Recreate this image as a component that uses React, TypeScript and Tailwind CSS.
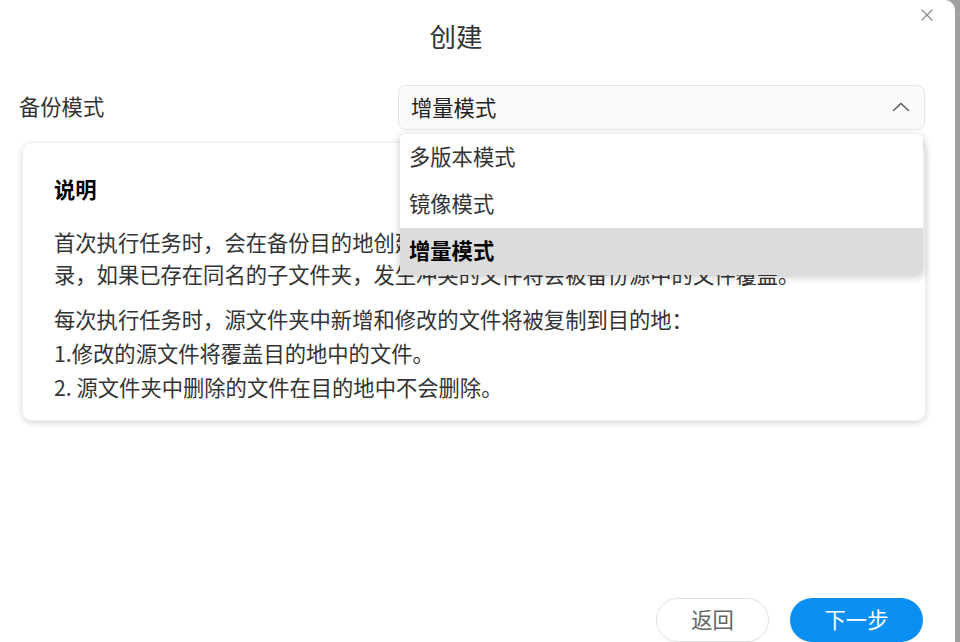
import { useState } from "react";

const modes = ["多版本模式", "镜像模式", "增量模式"];

function CloseIcon() {
  return (
    <svg width="12" height="12" viewBox="0 0 12 12" aria-hidden>
      <path d="M1 1L11 11M11 1L1 11" stroke="#8a8a8a" strokeWidth="1.3" strokeLinecap="round" />
    </svg>
  );
}

function ChevronUp() {
  return (
    <svg width="18" height="10" viewBox="0 0 18 10" aria-hidden>
      <path d="M1.5 8.5L9 1.5L16.5 8.5" fill="none" stroke="#555" strokeWidth="1.3" strokeLinecap="round" />
    </svg>
  );
}

export default function App() {
  const [mode, setMode] = useState("增量模式");
  const [open, setOpen] = useState(true);

  return (
    <div
      className="flex h-[642px] w-[960px] overflow-hidden bg-[#a0a0a0]"
      style={{ fontFamily: '"Noto Sans CJK SC", "Noto Sans", sans-serif' }}
    >
      <div className="relative flex w-[955px] flex-col rounded-tr-[10px] bg-white">
        <button type="button" className="absolute right-[22px] top-[9px] p-0">
          <CloseIcon />
        </button>

        <div className="flex h-[76px] items-center justify-center pb-[4px] pr-[43px] text-[26.5px] text-[#333]">
          创建
        </div>

        <div className="mt-[9px] flex h-[45px] items-center">
          <span className="pb-[3px] pl-[19px] text-[21.3px] text-[#333]">备份模式</span>
          <div className="relative ml-auto mr-[30px] h-full w-[527px]">
            <button
              type="button"
              onClick={() => setOpen(!open)}
              className="flex h-full w-full items-center justify-between rounded-[8px] border border-[#e6e6e6] bg-[#fafafa] pb-[2px] pl-[12px] pr-[14px] text-[21.3px] text-[#222]"
            >
              {mode}
              <ChevronUp />
            </button>
            {open ? (
              <div className="absolute left-[2px] right-[2px] top-[49px] z-10 overflow-hidden rounded-[6px] bg-white shadow-[0_2px_8px_rgba(0,0,0,0.22)]">
                {modes.map((m) => (
                  <div
                    key={m}
                    onClick={() => {
                      setMode(m);
                      setOpen(false);
                    }}
                    className={`flex h-[47px] cursor-pointer items-center pb-[3px] pl-[9px] text-[21.3px] ${
                      m === mode ? "bg-[#dcdcdc] font-bold text-black" : "text-[#333]"
                    }`}
                  >
                    {m}
                  </div>
                ))}
              </div>
            ) : null}
          </div>
        </div>

        <div className="ml-[22px] mr-[29px] mt-[12px] h-[279px] rounded-[10px] border border-[#f0f0f0] px-[31px] pt-[30px] text-[21.3px] text-[#333] shadow-[0_2px_6px_rgba(0,0,0,0.16)]">
          <h4 className="text-[21.3px] font-bold leading-[32px] text-black">说明</h4>
          <p className="mt-[21px] leading-[32px]">
            首次执行任务时，会在备份目的地创建一个与备份源中的每个文件夹名称相同的子目
            <br />
            录，如果已存在同名的子文件夹，发生冲突的文件将会被备份源中的文件覆盖。
          </p>
          <div className="mt-[12px] leading-[34px]">
            <div>每次执行任务时，源文件夹中新增和修改的文件将被复制到目的地：</div>
            <div>1.修改的源文件将覆盖目的地中的文件。</div>
            <div>2. 源文件夹中删除的文件在目的地中不会删除。</div>
          </div>
        </div>

        <div className="mr-[32px] mt-[177px] flex justify-end gap-[21px]">
          <button
            type="button"
            className="h-[44px] w-[113px] rounded-full border border-[#e0e0e0] bg-white pb-[2px] text-[21.3px] text-[#666]"
          >
            返回
          </button>
          <button
            type="button"
            className="h-[44px] w-[133px] rounded-full bg-[#0b8ff3] pb-[2px] text-[21.3px] text-white"
          >
            下一步
          </button>
        </div>
      </div>
    </div>
  );
}
